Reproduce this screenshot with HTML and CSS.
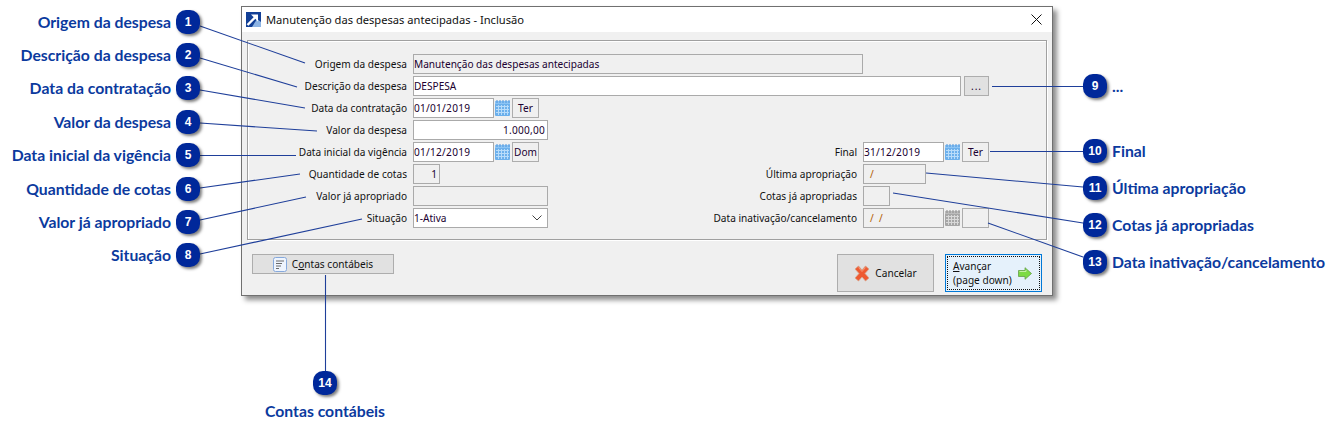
FILE: index.html
```html
<!DOCTYPE html>
<html lang="pt-br">
<head>
    <meta charset="UTF-8">
    <title>Manutenção das despesas antecipadas - Inclusão</title>
    <link rel="stylesheet" href="styles.css">
</head>
<body>
<div class="canvas">
    <div class="window">
        <div class="titlebar">
            <svg class="title-icon" width="15" height="15" viewBox="0 0 15 15">
                <rect width="15" height="15" fill="#123f96"/>
                <path d="M6 15 L11 7 L15 10 V15 Z" fill="#8db4e4"/>
                <path d="M1.500 13 L9 5.500" stroke="#fff" stroke-width="2.400" fill="none"/>
                <path d="M5 2.500 H12 V9.500 Z" fill="#fff"/>
            </svg>
            <span class="title-text">Manutenção das despesas antecipadas - Inclusão</span>
            <svg class="close-icon" width="11" height="11" viewBox="0 0 11 11">
                <path d="M0.5 0.5 L10.5 10.5 M10.5 0.5 L0.5 10.5" stroke="#111" stroke-width="1" fill="none"/>
            </svg>
        </div>
        <div class="group">
            <div class="row">
                <label>Origem da despesa</label>
                <div class="fields wide"><div class="field ro w450">Manutenção das despesas antecipadas</div></div>
            </div>
            <div class="row">
                <label>Descrição da despesa</label>
                <div class="fields wide">
                    <div class="field w548">DESPESA</div>
                    <div class="btn-small dots">...</div>
                </div>
            </div>
            <div class="row">
                <label>Data da contratação</label>
                <div class="fields">
                    <div class="field w81 date">01/01/2019</div>
                    <svg class="cal" width="15" height="16" viewBox="0 0 15 16"><use href="#cal-blue"/></svg>
                    <div class="btn-small">Ter</div>
                </div>
            </div>
            <div class="row">
                <label>Valor da despesa</label>
                <div class="fields"><div class="field w135 right date">1.000,00</div></div>
            </div>
            <div class="row">
                <label>Data inicial da vigência</label>
                <div class="fields">
                    <div class="field w81 date">01/12/2019</div>
                    <svg class="cal" width="15" height="16" viewBox="0 0 15 16"><use href="#cal-blue"/></svg>
                    <div class="btn-small">Dom</div>
                </div>
                <label>Final</label>
                <div class="fields">
                    <div class="field w81 date">31/12/2019</div>
                    <svg class="cal" width="15" height="16" viewBox="0 0 15 16"><use href="#cal-blue"/></svg>
                    <div class="btn-small">Ter</div>
                </div>
            </div>
            <div class="row">
                <label>Quantidade de cotas</label>
                <div class="fields"><div class="field ro w27 right">1</div></div>
                <label>Última apropriação</label>
                <div class="fields"><div class="field ro w63 slashes">/</div></div>
            </div>
            <div class="row">
                <label>Valor já apropriado</label>
                <div class="fields"><div class="field ro w135"></div></div>
                <label>Cotas já apropriadas</label>
                <div class="fields"><div class="field ro w27"></div></div>
            </div>
            <div class="row">
                <label>Situação</label>
                <div class="fields">
                    <div class="field w135 select">1-Ativa
                        <svg width="10" height="6" viewBox="0 0 10 6"><path d="M0.5 0.5 L5 5 L9.5 0.5" stroke="#444" fill="none"/></svg>
                    </div>
                </div>
                <label>Data inativação/cancelamento</label>
                <div class="fields">
                    <div class="field ro w81 slashes">/ &nbsp;/</div>
                    <svg class="cal" width="15" height="16" viewBox="0 0 15 16"><use href="#cal-gray"/></svg>
                    <div class="btn-small blank"></div>
                </div>
            </div>
        </div>
        <div class="actions">
            <div class="btn btn-contas">
                <svg width="14" height="15" viewBox="0 0 14 15">
                    <rect x="0.5" y="0.5" width="13" height="14" rx="2" fill="#eef4fd" stroke="#86a9dc"/>
                    <path d="M3 4 H11 M3 6.500 H9 M3 9 H8 M3 11.500 H6" stroke="#6a6a6a" stroke-width="1"/>
                </svg>
                <span>C<u>o</u>ntas contábeis</span>
            </div>
            <div class="btn btn-cancel">
                <svg width="16" height="17" viewBox="0 0 16 17">
                    <path d="M1 4 L4.500 1 L8 5 L11.500 1 L15 4 L11 8.500 L15 13 L11.500 16 L8 12 L4.500 16 L1 13 L5 8.500 Z" fill="#ee5a32" stroke="#d8a48c" stroke-width="0.8" stroke-linejoin="round"/>
                    <path d="M4.500 2.500 L8 6.500 L11.500 2.500" stroke="#f79a78" fill="none"/>
                </svg>
                <span>Cancelar</span>
            </div>
            <div class="btn btn-next">
                <span class="next-text"><u>A</u>vançar<br>(page down)</span>
                <svg width="14" height="13" viewBox="0 0 14 13">
                    <path d="M0.500 3.500 H7 V0.700 L13.500 6.500 L7 12.300 V9.500 H0.500 Z" fill="#7ddb44" stroke="#64a04a" stroke-width="0.8" stroke-linejoin="round"/>
                    <path d="M1.500 4.500 H8 V3" stroke="#c4f0a4" fill="none"/>
                </svg>
            </div>
        </div>
    </div>

    <svg class="lines" width="1342" height="437">
        <defs>
            <g id="cal-blue">
                <rect x="0" y="1" width="15" height="15" rx="1" fill="#6cb0ec"/>
                <rect x="0" y="1" width="15" height="3" fill="#8cc4f4"/>
                <path d="M2 0 V3 M5 0 V3 M8 0 V3 M11 0 V3 M14 0 V3" stroke="#4c94dc"/>
                <path d="M1 6.500 H14 M1 9.500 H14 M1 12.500 H14 M3.500 5 V15 M6.500 5 V15 M9.500 5 V15 M12.500 5 V15" stroke="#b8dcfa" stroke-width="1"/>
            </g>
            <g id="cal-gray">
                <rect x="0" y="1" width="15" height="15" rx="1" fill="#a6a6a6"/>
                <rect x="0" y="1" width="15" height="3" fill="#bcbcbc"/>
                <path d="M2 0 V3 M5 0 V3 M8 0 V3 M11 0 V3 M14 0 V3" stroke="#8a8a8a"/>
                <path d="M1 6.500 H14 M1 9.500 H14 M1 12.500 H14 M3.500 5 V15 M6.500 5 V15 M9.500 5 V15 M12.500 5 V15" stroke="#d8d8d8" stroke-width="1"/>
            </g>
        </defs>
        <g stroke="#1f3f9a" stroke-width="1.1" fill="none">
            <path d="M200 26 L305 63"/>
            <path d="M200 58 L297 87"/>
            <path d="M200 90 L305 108"/>
            <path d="M200 123 L317 131"/>
            <path d="M200 155.500 H296"/>
            <path d="M200 188 L300 174"/>
            <path d="M200 220 L306 197"/>
            <path d="M200 254 L362 219"/>
            <path d="M992 86.500 H1083"/>
            <path d="M990 151.500 H1083"/>
            <path d="M926 173 L1083 187"/>
            <path d="M893 193 L1083 223"/>
            <path d="M988 223 L1083 257"/>
            <path d="M325.500 275 V371"/>
        </g>
    </svg>

    <div class="callout left c1"><span>Origem da despesa</span><b>1</b></div>
    <div class="callout left c2"><span>Descrição da despesa</span><b>2</b></div>
    <div class="callout left c3"><span>Data da contratação</span><b>3</b></div>
    <div class="callout left c4"><span>Valor da despesa</span><b>4</b></div>
    <div class="callout left c5"><span>Data inicial da vigência</span><b>5</b></div>
    <div class="callout left c6"><span>Quantidade de cotas</span><b>6</b></div>
    <div class="callout left c7"><span>Valor já apropriado</span><b>7</b></div>
    <div class="callout left c8"><span>Situação</span><b>8</b></div>

    <div class="callout right c9"><b>9</b><span>...</span></div>
    <div class="callout right c10"><b>10</b><span>Final</span></div>
    <div class="callout right c11"><b>11</b><span>Última apropriação</span></div>
    <div class="callout right c12"><b>12</b><span>Cotas já apropriadas</span></div>
    <div class="callout right c13"><b>13</b><span>Data inativação/cancelamento</span></div>

    <div class="callout bottom c14"><b>14</b><span>Contas contábeis</span></div>
</div>
</body>
</html>
```

FILE: styles.css
```css
* {
    box-sizing: border-box;
}
html, body {
    margin: 0;
    padding: 0;
    background-color: #fff;
}
.canvas {
    position: relative;
    width: 1342px;
    height: 437px;
    overflow: hidden;
    font-family: "Noto Sans", sans-serif;
}

/* janela */
.window {
    position: absolute;
    left: 241px;
    top: 6px;
    width: 812px;
    height: 290px;
    background-color: #f0f0f0;
    border: 1px solid #707070;
    box-shadow: 4px 4px 5px rgba(0,0,0,0.45);
    font-size: 10.1px;
    color: #111;
}
.titlebar {
    height: 25px;
    background-color: #fff;
    display: flex;
    align-items: center;
    padding: 0 10px 0 4px;
}
.title-icon {
    margin-right: 5px;
}
.title-text {
    font-size: 11.15px;
    flex-grow: 1;
}

/* grupo */
.group {
    margin: 8px 5px 0;
    height: 200px;
    padding-top: 13px;
    border: 1px solid #a0a0a0;
    box-shadow: 1px 1px 0 #fff, inset 1px 1px 0 #fff;
    display: flex;
    flex-direction: column;
    gap: 2px;
}
.row {
    display: grid;
    grid-template-columns: 159px 283px 155px 1fr;
    column-gap: 6px;
    height: 20px;
    align-items: center;
}
.row label {
    text-align: right;
    white-space: nowrap;
}
.fields {
    display: flex;
    align-items: center;
    gap: 1px;
}
.fields.wide {
    grid-column: 2 / -1;
    gap: 2px;
}
.field {
    height: 20px;
    line-height: 18px;
    padding: 0;
    background-color: #fff;
    border: 1px solid #aaa;
    color: #200030;
    white-space: nowrap;
}
.field.date {
    letter-spacing: 0.25px;
}
.field.ro {
    background-color: #f0f0f0;
}
.field.right {
    text-align: right;
    padding-right: 2px;
}
.field.slashes {
    color: #b05a00;
    padding-left: 6px;
}
.field.select {
    display: flex;
    justify-content: space-between;
    align-items: center;
    padding-right: 5px;
}
.w27 { width: 27px; }
.w63 { width: 63px; }
.w81 { width: 81px; }
.w135 { width: 135px; }
.w450 { width: 450px; }
.w548 { width: 548px; }
.btn-small {
    width: 27px;
    height: 20px;
    margin-left: 1px;
    line-height: 18px;
    text-align: center;
    background-color: #f0f0f0;
    border: 1px solid #adadad;
    color: #200030;
}
.btn-small.dots {
    width: 25px;
    background-color: #e1e1e1;
    letter-spacing: 1px;
}

/* botoes */
.actions {
    margin-top: 14px;
    padding: 0 10px;
    display: flex;
    align-items: flex-start;
    gap: 11px;
}
.btn {
    display: flex;
    align-items: center;
    background-color: #e1e1e1;
    border: 1px solid #adadad;
    font-size: 10.1px;
}
.btn-contas {
    width: 142px;
    height: 20px;
    justify-content: center;
    gap: 5px;
    margin-right: auto;
}
.btn-cancel {
    width: 97px;
    height: 38px;
    justify-content: center;
    gap: 5px;
}
.btn-next {
    width: 97px;
    height: 38px;
    padding: 0 9px 0 7px;
    justify-content: space-between;
    background-color: #e5f1fb;
    border-color: #0078d7;
    outline: 1px dotted #111;
    outline-offset: -3px;
}
.next-text {
    line-height: 14px;
}

/* anotacoes */
.lines {
    position: absolute;
    left: 0;
    top: 0;
    pointer-events: none;
}
.callout {
    position: absolute;
    display: flex;
    align-items: center;
    gap: 5px;
    font-family: "Lato", sans-serif;
    font-weight: bold;
    font-size: 15.75px;
    color: #0b3a9e;
    white-space: nowrap;
}
.callout span {
    margin-bottom: 2px;
}
.callout b {
    flex: none;
    width: 24px;
    height: 24px;
    border-radius: 10px;
    background-color: #00289a;
    box-shadow: 2px 2px 3px rgba(0,0,0,0.5);
    color: #fff;
    font-family: "Liberation Sans", sans-serif;
    font-size: 12px;
    line-height: 24px;
    text-align: center;
}
.callout.left {
    right: 1142px;
}
.callout.right {
    left: 1083px;
}
.callout.bottom {
    left: 225px;
    top: 371px;
    width: 200px;
    flex-direction: column;
    gap: 6px;
}
.c1 { top: 10px; }
.c2 { top: 43px; }
.c3 { top: 76px; }
.c4 { top: 110px; }
.c5 { top: 143px; }
.c6 { top: 177px; }
.c7 { top: 210px; }
.c8 { top: 243px; }
.c9 { top: 74px; }
.c10 { top: 139px; }
.c11 { top: 176px; }
.c12 { top: 213px; }
.c13 { top: 250px; }
```
